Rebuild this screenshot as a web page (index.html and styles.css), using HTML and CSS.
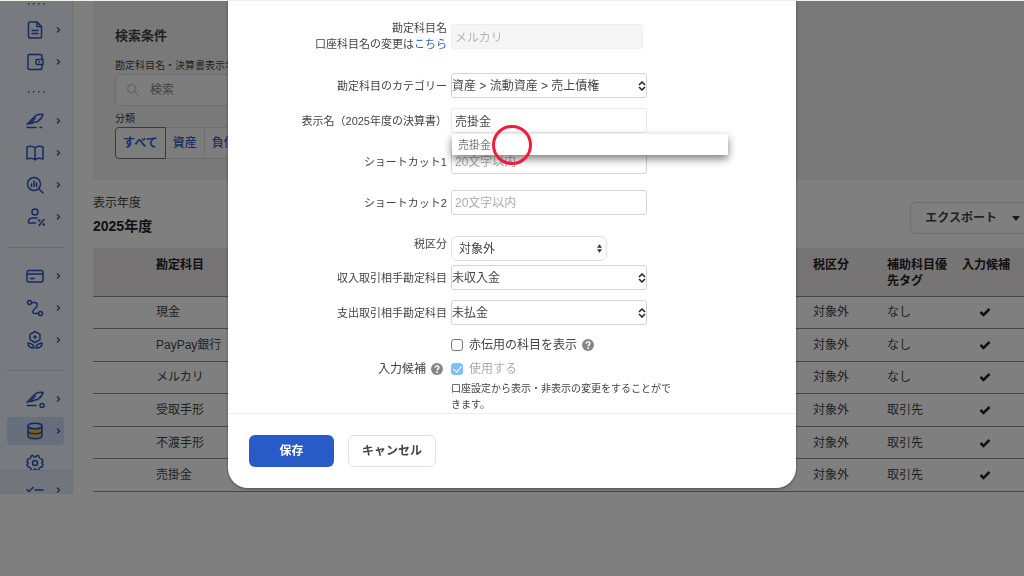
FILE: index.html
```html
<!DOCTYPE html>
<html lang="ja">
<head>
    <meta charset="UTF-8">
    <meta name="viewport" content="width=device-width, initial-scale=1.0">
    <title>勘定科目の編集</title>
    <link rel="stylesheet" href="styles.css">
</head>
<body>
    <svg class="defs" aria-hidden="true">
        <symbol id="chevron" viewBox="0 0 6 8"><path d="M2 1.5 4.5 4 2 6.5"/></symbol>
        <symbol id="check" viewBox="0 0 12 10"><path d="M1.5 5 4.5 8 10.5 2"/></symbol>
        <symbol id="updown" viewBox="0 0 8 10"><path d="M1 4 4 1l3 3M1 6l3 3 3-3"/></symbol>
        <symbol id="help" viewBox="0 0 12 12">
            <circle cx="6" cy="6" r="6" fill="#858585"/>
            <path d="M4.2 4.7c0-2.4 3.7-2.4 3.7-.2 0 1.3-1.8 1.3-1.8 2.7" fill="none" stroke="#fff" stroke-width="1.5"/>
            <circle cx="6.1" cy="9" r=".9" fill="#fff"/>
        </symbol>
    </svg>

    <div class="topline"></div>

    <div class="app">
        <aside class="sidebar">
            <nav class="nav">
                <div class="dots dots-first"></div>
                <a class="nav-item" href="#" aria-label="書類">
                    <svg class="icon" viewBox="0 0 18 18"><path d="M3.500 1H11l4.500 4.500V16a1 1 0 0 1-1 1h-11a1 1 0 0 1-1-1V2a1 1 0 0 1 1-1zM11 1v4.500h4.500M6 9.500h6M6 12.500h6"/></svg>
                    <svg class="chevron"><use href="#chevron"/></svg>
                </a>
                <a class="nav-item" href="#" aria-label="口座">
                    <svg class="icon" viewBox="0 0 18 18"><path d="M16 6V3a1.500 1.500 0 0 0-1.500-1.500h-11A1.500 1.500 0 0 0 2 3v12a1.500 1.500 0 0 0 1.500 1.500h11A1.500 1.500 0 0 0 16 15v-3M17 6.500h-6a1 1 0 0 0-1 1v3a1 1 0 0 0 1 1h6zM13 9h.5"/></svg>
                    <svg class="chevron"><use href="#chevron"/></svg>
                </a>
                <div class="dots"></div>
                <a class="nav-item" href="#" aria-label="手動で仕訳">
                    <svg class="icon" viewBox="0 0 18 18"><path d="M1 12.500 8.500 4.500C11 2.300 14 2 17 2.500c0 1.500-.5 2-1.500 2.500.2 2-1 2.500-2.500 2.800-.3 1.700-1.500 2.200-3 2-2 0-3 1.700-5 1.700H2.500M5 10.500 9.500 6M1 15.500h9M14 15.500h1.500"/></svg>
                    <svg class="chevron"><use href="#chevron"/></svg>
                </a>
                <a class="nav-item" href="#" aria-label="帳簿">
                    <svg class="icon" viewBox="0 0 18 18"><path d="M9 4C7 2 4 2 1 3v12c3-1 6-1 8 1 2-2 5-2 8-1V3c-3-1-6-1-8 1zv12"/></svg>
                    <svg class="chevron"><use href="#chevron"/></svg>
                </a>
                <a class="nav-item" href="#" aria-label="分析">
                    <svg class="icon" viewBox="0 0 18 18"><circle cx="8" cy="8" r="6.500"/><path d="M12.800 12.800 17 17M5.500 8v2.500M8 5v5.500M10.500 7v3.500"/></svg>
                    <svg class="chevron"><use href="#chevron"/></svg>
                </a>
                <a class="nav-item" href="#" aria-label="税務">
                    <svg class="icon" viewBox="0 0 18 18"><circle cx="9" cy="4" r="3"/><path d="M9.500 15H4c-1.500 0-2-.8-1.500-2C3 11 4.500 10 6.500 10h4.500M13 17.500l5-6"/><circle cx="13.300" cy="12.500" r=".6"/><circle cx="17.700" cy="16.500" r=".6"/></svg>
                    <svg class="chevron"><use href="#chevron"/></svg>
                </a>
                <hr class="nav-line">
                <a class="nav-item" href="#" aria-label="カード">
                    <svg class="icon" viewBox="0 0 18 18"><rect x="1" y="3.500" width="16" height="11.500" rx="2"/><path d="M1 7h16M4.500 11.500H8"/></svg>
                    <svg class="chevron"><use href="#chevron"/></svg>
                </a>
                <a class="nav-item" href="#" aria-label="連携">
                    <svg class="icon" viewBox="0 0 18 18"><circle cx="3.500" cy="3.500" r="2"/><circle cx="14.500" cy="14.500" r="2"/><path d="M5.500 3.500h3C12 3.500 12 7 9 9.500s-3 5 .5 5h3"/></svg>
                    <svg class="chevron"><use href="#chevron"/></svg>
                </a>
                <a class="nav-item" href="#" aria-label="成長">
                    <svg class="icon" viewBox="0 0 18 18"><path d="M9 .5 14 3.300v5.400l-5 2.800-5-2.800V3.300zM8 17c0-3-2-4.500-6-5 0 3.500 2 5 6 5zM10 17c0-3 2-4.500 6-5 0 3.500-2 5-6 5z"/><circle cx="9" cy="6" r="1"/></svg>
                    <svg class="chevron"><use href="#chevron"/></svg>
                </a>
                <hr class="nav-line">
                <a class="nav-item" href="#" aria-label="仕訳設定">
                    <svg class="icon" viewBox="0 0 18 18"><path d="M1 12.500 8.500 4.500C11 2.300 14 2 17 2.500c0 1.500-.5 2-1.500 2.500.2 2-1 2.500-2.500 2.800-.3 1.700-1.500 2.200-3 2-2 0-3 1.700-5 1.700H2.500M5 10.500 9.500 6M1 15.500h9"/><circle cx="16" cy="15.500" r="2"/></svg>
                    <svg class="chevron"><use href="#chevron"/></svg>
                </a>
                <a class="nav-item active" href="#" aria-label="マスタ">
                    <svg class="icon" viewBox="0 0 18 18"><path class="gold" d="M2 4v10c0 3.500 14 3.500 14 0V4c0 3.500-14 3.500-14 0z"/><ellipse cx="9" cy="4" rx="7" ry="2.700"/><path d="M2 9c0 3.500 14 3.500 14 0"/></svg>
                    <svg class="chevron"><use href="#chevron"/></svg>
                </a>
                <a class="nav-item" href="#" aria-label="設定">
                    <svg class="icon" viewBox="0 0 18 18"><path d="M5.500 1.500h1.500Q9 4.500 11 1.500h1.500l1 2.500q.5 1 2.500 1l1 2.500Q14.500 9 17 10.500L16 13q-2 0-2.500 1l-1 2.500H11Q9 13.500 7 16.500H5.500l-1-2.500q-.5-1-2.500-1l-1-2.500Q3.500 9 1 7.500L2 5q2 0 2.500-1z"/><circle cx="9" cy="9" r="2.500"/></svg>
                </a>
            </nav>
            <a class="nav-more" href="#" aria-label="タスク">
                <svg class="icon" viewBox="0 0 18 18"><path d="M1 8.500 3 10.500 7 6.500M9 9h8"/></svg>
                <svg class="chevron"><use href="#chevron"/></svg>
            </a>
        </aside>

        <main class="main">
            <section class="search">
                <h2>検索条件</h2>
                <label class="caption" for="keyword">勘定科目名・決算書表示名</label>
                <div class="search-box">
                    <svg viewBox="0 0 14 14"><circle cx="5.500" cy="5.500" r="4"/><path d="M8.500 8.500 13 13"/></svg>
                    <input id="keyword" type="text" placeholder="検索">
                </div>
                <span class="caption">分類</span>
                <div class="tabs">
                    <button class="tab selected">すべて</button>
                    <button class="tab">資産</button>
                    <button class="tab">負債</button>
                </div>
            </section>

            <div class="year">
                <div>
                    <div class="year-caption">表示年度</div>
                    <div class="year-value">2025年度</div>
                </div>
                <button class="export">エクスポート <svg viewBox="0 0 8 5"><path d="M0 0h8L4 5z"/></svg></button>
            </div>

            <table class="accounts">
                <thead>
                    <tr>
                        <th class="col-space"></th>
                        <th>勘定科目</th>
                        <th class="col-tax">税区分</th>
                        <th class="col-tag">補助科目優先タグ</th>
                        <th class="col-input">入力候補</th>
                    </tr>
                </thead>
                <tbody>
                    <tr><td></td><td>現金</td><td>対象外</td><td>なし</td><td><svg class="tick"><use href="#check"/></svg></td></tr>
                    <tr><td></td><td>PayPay銀行</td><td>対象外</td><td>なし</td><td><svg class="tick"><use href="#check"/></svg></td></tr>
                    <tr><td></td><td>メルカリ</td><td>対象外</td><td>なし</td><td><svg class="tick"><use href="#check"/></svg></td></tr>
                    <tr><td></td><td>受取手形</td><td>対象外</td><td>取引先</td><td><svg class="tick"><use href="#check"/></svg></td></tr>
                    <tr><td></td><td>不渡手形</td><td>対象外</td><td>取引先</td><td><svg class="tick"><use href="#check"/></svg></td></tr>
                    <tr><td></td><td>売掛金</td><td>対象外</td><td>取引先</td><td><svg class="tick"><use href="#check"/></svg></td></tr>
                </tbody>
            </table>
        </main>
    </div>

    <div class="overlay">
        <form class="modal">
            <div class="fields">
                <div class="row">
                    <div class="label"><label for="name">勘定科目名</label><br>口座科目名の変更は<a href="#">こちら</a></div>
                    <input class="control name" id="name" type="text" value="メルカリ" disabled>
                </div>
                <div class="row space-l">
                    <label class="label" for="category">勘定科目のカテゴリー</label>
                    <div class="select">
                        <select class="control" id="category"><option>資産 &gt; 流動資産 &gt; 売上債権</option></select>
                        <svg class="updown"><use href="#updown"/></svg>
                    </div>
                </div>
                <div class="row">
                    <label class="label" for="display">表示名（2025年度の決算書）</label>
                    <div class="suggest">
                        <input class="control light" id="display" type="text" value="売掛金">
                        <div class="suggest-list">
                            <button type="button">売掛金</button>
                            <span class="marker"></span>
                        </div>
                    </div>
                </div>
                <div class="row space-m">
                    <label class="label" for="short1">ショートカット1</label>
                    <input class="control" id="short1" type="text" placeholder="20文字以内">
                </div>
                <div class="row space-m">
                    <label class="label" for="short2">ショートカット2</label>
                    <input class="control" id="short2" type="text" placeholder="20文字以内">
                </div>
                <div class="row space-l top">
                    <label class="label" for="tax">税区分</label>
                    <div class="select rounded">
                        <select class="control" id="tax"><option>対象外</option></select>
                        <svg class="arrows" viewBox="0 0 6 10"><path d="M0 4 3 0l3 4zM0 6l3 4 3-4z"/></svg>
                    </div>
                </div>
                <div class="row space-s">
                    <label class="label" for="income">収入取引相手勘定科目</label>
                    <div class="select">
                        <select class="control" id="income"><option>未収入金</option></select>
                        <svg class="updown"><use href="#updown"/></svg>
                    </div>
                </div>
                <div class="row">
                    <label class="label" for="expense">支出取引相手勘定科目</label>
                    <div class="select">
                        <select class="control" id="expense"><option>未払金</option></select>
                        <svg class="updown"><use href="#updown"/></svg>
                    </div>
                </div>
                <div class="row space-m-s">
                    <span></span>
                    <div class="check">
                        <input id="red" type="checkbox"><label for="red">赤伝用の科目を表示</label>
                        <svg class="help"><use href="#help"/></svg>
                    </div>
                </div>
                <div class="row space-s">
                    <div class="label label-help">入力候補 <svg class="help"><use href="#help"/></svg></div>
                    <div class="check off">
                        <input id="use" type="checkbox" checked disabled><label for="use">使用する</label>
                    </div>
                </div>
                <div class="row space-xs">
                    <span></span>
                    <p class="note">口座設定から表示・非表示の変更をすることができます。</p>
                </div>
            </div>
            <div class="actions">
                <button class="save" type="button">保存</button>
                <button class="cancel" type="button">キャンセル</button>
            </div>
        </form>
    </div>
</body>
</html>
```
FILE: styles.css
```css
* {
    box-sizing: border-box;
}

body {
    margin: 0;
    background: #fff;
    color: #444;
    font-family: "Liberation Sans", "Noto Sans CJK JP", sans-serif;
    font-size: 12px;
    line-height: 16px;
}

button, input, select {
    font: inherit;
    color: inherit;
}

.defs {
    display: none;
}

.topline {
    position: relative;
    z-index: 2;
    height: 1px;
    background: #f5efe6;
}

/* sidebar */
.app {
    display: flex;
    height: calc(100vh - 83px);
    overflow: hidden;
}

.sidebar {
    display: flex;
    flex-direction: column;
    flex: none;
    width: 73px;
    background: #eff4fd;
    border-right: 1px solid #dde6f5;
}

.nav {
    display: flex;
    flex-direction: column;
    flex: 1;
    min-height: 0;
    overflow: hidden;
    padding: 0 8px 0 7px;
}

.nav-item, .nav-more {
    display: flex;
    flex: none;
    align-items: center;
    justify-content: space-between;
    height: 28px;
    margin: 2px 0;
    padding: 0 3px 0 19px;
    border-radius: 4px;
}

.nav-item.active {
    background: #cfdefa;
}

.nav-more {
    height: 24px;
    margin: 0;
    padding: 14px 11px 0 26px;
    border-top: 1px solid #d3e0f8;
    border-radius: 0;
    background: #e2eaf8;
}

.icon {
    flex: none;
    width: 18px;
    height: 18px;
    overflow: visible;
    fill: none;
    stroke: #2a56c0;
    stroke-width: 1.5;
    stroke-linecap: round;
    stroke-linejoin: round;
}

.icon .gold {
    fill: #f5b649;
}

.chevron {
    width: 6px;
    height: 8px;
    fill: none;
    stroke: #2a56c0;
    stroke-width: 1.3;
}

.dots {
    flex: none;
    width: 20px;
    height: 27px;
    margin-left: 19px;
    background: radial-gradient(circle, #5b80d4 1px, transparent 1px) 0 50% / 5px 5px repeat-x;
}

.dots-first {
    height: 13px;
    background-position: 0 0;
}

.nav-line {
    flex: none;
    width: 100%;
    height: 1px;
    margin: 14px 0 12px;
    border: 0;
    background: #cdd9ee;
}

/* page behind the modal */
.main {
    flex: 1;
    min-width: 0;
    padding-left: 20px;
}

.search {
    height: 179px;
    padding: 27px 22px 0;
    background: #f2f2f2;
}

.search h2 {
    margin: 0 0 14px;
    font-size: 13px;
    line-height: 16px;
}

.caption {
    display: block;
    font-size: 10px;
    line-height: 16px;
}

.search-box {
    display: flex;
    align-items: center;
    gap: 10px;
    width: 320px;
    height: 32px;
    margin: 0 0 5px;
    padding-left: 10px;
    border: 1px solid #ddd;
    border-radius: 6px;
    background: #fafafa;
}

.search-box svg {
    width: 14px;
    height: 14px;
    fill: none;
    stroke: #bbb;
}

.search-box input {
    border: 0;
    padding: 0;
    background: none;
}

.search-box input::placeholder {
    color: #888;
}

.tabs {
    display: flex;
}

.tab {
    height: 32px;
    padding: 0 7px;
    border: 1px solid #ddd;
    border-left: 0;
    background: #fafafa;
    color: #2f5fd0;
    font-weight: 500;
}

.tab.selected {
    border: 1px solid #777;
    border-radius: 4px 0 0 4px;
    font-weight: bold;
}

.year {
    display: flex;
    justify-content: space-between;
    height: 68px;
    padding-top: 15px;
    overflow: hidden;
}

.year-value {
    margin-top: 7px;
    color: #222;
    font-size: 14px;
    font-weight: bold;
}

.export {
    display: flex;
    align-items: center;
    gap: 15px;
    height: 32px;
    margin: 7px -14px 0 0;
    padding: 0 17px 0 14px;
    border: 1px solid #ddd;
    border-radius: 6px;
    background: none;
    font-weight: bold;
}

.export svg {
    width: 8px;
    height: 5px;
    fill: #333;
}

.accounts {
    width: 100%;
    height: 244px;
    border-collapse: collapse;
    table-layout: fixed;
}

.accounts th, .accounts td {
    padding: 0;
    border-bottom: 1px solid #8c8c8c;
    text-align: left;
}

.accounts th {
    height: 48px;
    padding-top: 9px;
    background: #efe9ea;
    color: #222;
    vertical-align: top;
}

.accounts td {
    height: 32px;
}

.accounts .col-space {
    width: 63px;
}

.accounts .col-tax {
    width: 74px;
}

.accounts .col-tag {
    width: 75px;
    padding-right: 14px;
}

.accounts .col-input {
    width: 62px;
}

.tick {
    display: block;
    width: 12px;
    height: 10px;
    margin-left: 17px;
    fill: none;
    stroke: #222;
    stroke-width: 2.5;
}

/* modal */
.overlay {
    position: fixed;
    inset: 0;
    display: flex;
    justify-content: center;
    align-items: flex-start;
    background: rgba(0, 0, 0, 0.5);
}

.modal {
    width: 100%;
    max-width: 568px;
    border-radius: 0 0 20px 20px;
    background: #fff;
    box-shadow: 0 1px 3px rgba(0, 0, 0, 0.4);
}

.fields {
    padding-top: 20px;
}

.row {
    display: grid;
    grid-template-columns: 219px 220px;
    gap: 4px;
    align-items: center;
    margin-top: 10px;
}

.row:first-child {
    margin-top: 0;
}

.row.space-xs {
    margin-top: 2px;
}

.row.space-s {
    margin-top: 4px;
}

.row.space-m {
    margin-top: 16px;
}

.row.space-l {
    margin-top: 21px;
}

.row.top {
    align-items: start;
}

.label {
    font-size: 11px;
    text-align: right;
}

.label a {
    color: #2f5fd0;
    text-decoration: none;
}

.control {
    width: 196px;
    height: 25px;
    padding: 0 3px;
    border: 1px solid #d4d4d4;
    border-radius: 3px;
    background: #fff;
}

.control::placeholder {
    color: #aaa;
}

.control.name {
    width: 192px;
    border-color: #eee;
    background: #f6f6f6;
    color: #b8b8b8;
}

.control.light {
    border-color: #e8e8e8;
}

/* the icon shares the grid cell with its select */
.select {
    display: grid;
    width: 196px;
    align-items: center;
}

.select > * {
    grid-area: 1 / 1;
}

.select .control {
    width: 100%;
    padding: 0;
    appearance: none;
}

.select svg {
    justify-self: end;
    pointer-events: none;
}

.select.rounded {
    width: 156px;
}

.rounded .control {
    padding: 0 7px;
    border-color: #e2e2e2;
    border-radius: 6px;
}

.updown {
    width: 8px;
    height: 10px;
    margin-right: 1px;
    fill: none;
    stroke: #222;
    stroke-width: 1.5;
}

.arrows {
    width: 5px;
    height: 9px;
    margin-right: 5px;
    fill: #333;
}

.suggest {
    position: relative;
    display: flex;
}

.suggest-list {
    position: absolute;
    z-index: 1;
    top: 26px;
    left: 1px;
    width: 276px;
    background: #fff;
    box-shadow: 0 4px 8px rgba(0, 0, 0, 0.5);
}

.suggest-list button {
    display: block;
    width: 100%;
    height: 21px;
    padding: 0 6px;
    border: 0;
    background: none;
    color: #777;
    font-size: 11px;
    text-align: left;
}

.marker {
    position: absolute;
    top: -9px;
    left: 40px;
    width: 40px;
    height: 40px;
    border: 3px solid #f5193f;
    border-radius: 50%;
    pointer-events: none;
}

.check {
    display: flex;
    align-items: center;
    height: 20px;
}

.check input {
    display: grid;
    width: 12px;
    height: 12px;
    margin: 0 6px 0 0;
    border: 1px solid #777;
    border-radius: 3px;
    background: #fff;
    appearance: none;
}

.check input:checked {
    border-color: #7cc0fb;
    background: #7cc0fb;
}

.check input:checked::after {
    content: "";
    width: 4px;
    height: 7px;
    margin: 0 auto;
    border: solid #fff;
    border-width: 0 1px 1px 0;
    transform: rotate(40deg);
}

.check.off {
    color: #aaa;
}

.help {
    width: 12px;
    height: 12px;
    margin-left: 5px;
}

.label-help {
    display: flex;
    align-items: center;
    justify-content: flex-end;
    padding-right: 4px;
    font-size: 12px;
}

.note {
    margin: 0;
    font-size: 10px;
    line-height: 16px;
}

.actions {
    display: flex;
    gap: 14px;
    padding: 21px;
    border-top: 1px solid #eee;
}

.actions button {
    height: 32px;
    border-radius: 6px;
    font-weight: bold;
}

.save {
    width: 85px;
    border: 0;
    background: #285ac8;
    color: #fff;
}

.cancel {
    width: 88px;
    border: 1px solid #e2e2e2;
    background: #fff;
}
```
